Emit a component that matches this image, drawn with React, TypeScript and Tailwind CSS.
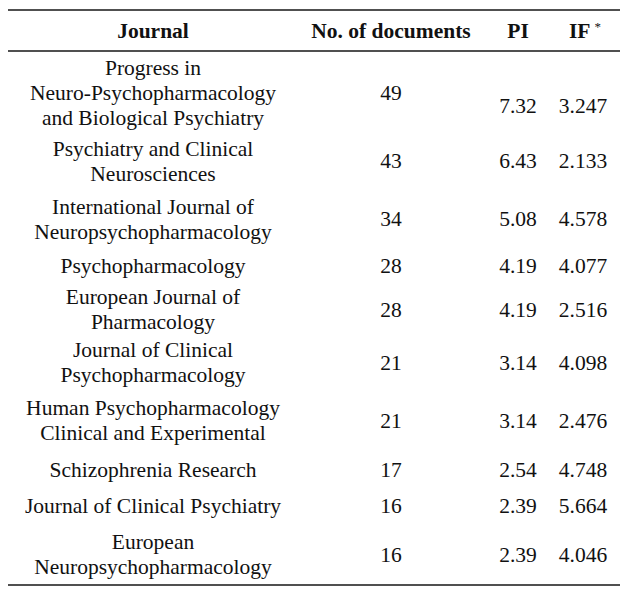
const rows = [
    { name: ["Progress in", "Neuro-Psychopharmacology", "and Biological Psychiatry"], docs: "49", pi: "7.32", impact: "3.247", h: "h-[79px]", shift: true },
    { name: ["Psychiatry and Clinical", "Neurosciences"], docs: "43", pi: "6.43", impact: "2.133", h: "h-[57px]" },
    { name: ["International Journal of", "Neuropsychopharmacology"], docs: "34", pi: "5.08", impact: "4.578", h: "h-[59px]" },
    { name: ["Psychopharmacology"], docs: "28", pi: "4.19", impact: "4.077", h: "h-[34px]" },
    { name: ["European Journal of", "Pharmacology"], docs: "28", pi: "4.19", impact: "2.516", h: "h-[52px]" },
    { name: ["Journal of Clinical", "Psychopharmacology"], docs: "21", pi: "3.14", impact: "4.098", h: "h-[56px]" },
    { name: ["Human Psychopharmacology", "Clinical and Experimental"], docs: "21", pi: "3.14", impact: "2.476", h: "h-[60px]" },
    { name: ["Schizophrenia Research"], docs: "17", pi: "2.54", impact: "4.748", h: "h-[38px]" },
    { name: ["Journal of Clinical Psychiatry"], docs: "16", pi: "2.39", impact: "5.664", h: "h-[35px]" },
    { name: ["European", "Neuropsychopharmacology"], docs: "16", pi: "2.39", impact: "4.046", h: "h-[62px]" },
]

const cols = "grid grid-cols-[290px_186px_68px_62px]"

export default function App() {
    return (
        <div className="min-h-[593px] w-[640px] bg-white pt-[9px] text-[#111] font-['Liberation_Serif','Times_New_Roman',serif] text-[21.5px] leading-[25px]">
            <div className="ml-[8px] w-[612px] border-t-2 border-b-2 border-[#505050]">
                <div className={`${cols} h-[41px] pt-[2px] items-center font-bold border-b-2 border-[#505050]`}>
                    <div className="text-center">Journal</div>
                    <div className="text-center">No. of documents</div>
                    <div className="text-center">PI</div>
                    <div className="text-center pl-[4px]">
                        IF<sup className="text-[13px] font-normal relative -top-[7px] ml-[4px]">*</sup>
                    </div>
                </div>
                {rows.map((r) => (
                    <div key={r.name.join(" ")} className={`${cols} ${r.h} pt-[4px] items-center`}>
                        <div className="flex flex-col items-center text-center">
                            {r.name.map((line) => (
                                <span key={line}>{line}</span>
                            ))}
                        </div>
                        <div className="text-center">{r.docs}</div>
                        <div className={`text-center ${r.shift ? "pt-[26px]" : ""}`}>{r.pi}</div>
                        <div className={`text-center ${r.shift ? "pt-[26px]" : ""}`}>{r.impact}</div>
                    </div>
                ))}
            </div>
        </div>
    )
}
